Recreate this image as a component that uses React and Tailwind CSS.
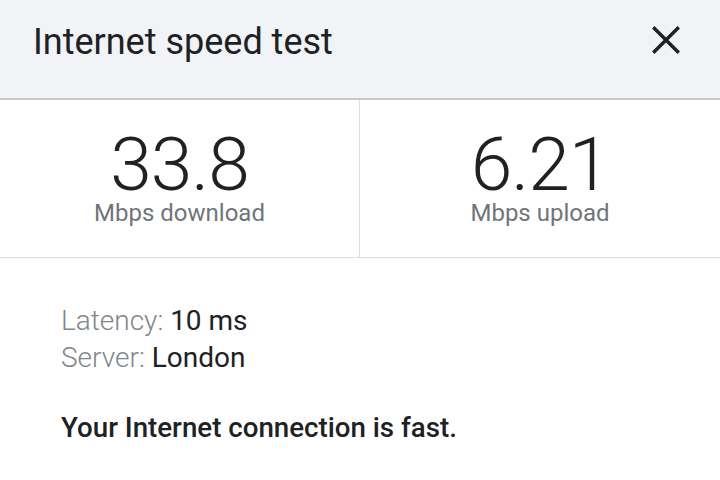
export default function App() {
  return (
    <div className="w-[720px] h-[480px] bg-white overflow-hidden" style={{ fontFamily: 'Roboto, "Noto Sans", sans-serif' }}>
      <div className="h-[100px] bg-[#f1f3f7] border-b-2 border-[#c9c9cc] flex items-start justify-between pl-[33px] pr-[36px]">
        <h1 className="text-[36px] text-[#202124] leading-none mt-[24px]">Internet speed test</h1>
        <svg width="36" height="36" viewBox="0 0 24 24" className="mt-[22px]">
          <path d="M3.5 3.5 L20.5 20.5 M20.5 3.5 L3.5 20.5" stroke="#202124" strokeWidth="2.3" fill="none" />
        </svg>
      </div>
      <div className="grid grid-cols-2 h-[158px] border-b border-[#dadce0]">
        <div className="flex flex-col items-center pt-[29px] border-r border-[#dadce0]">
          <div className="text-[75px] font-light leading-[70px] text-[#202124] tracking-[-1px]">33.8</div>
          <div className="text-[24px] text-[#70757a] leading-[24px] mt-[2px]">Mbps download</div>
        </div>
        <div className="flex flex-col items-center pt-[29px]">
          <div className="text-[75px] font-light leading-[70px] text-[#202124] tracking-[-1px]">6.21</div>
          <div className="text-[24px] text-[#70757a] leading-[24px] mt-[2px]">Mbps upload</div>
        </div>
      </div>
      <div className="pl-[61px] pt-[44px] text-[28px]">
        <div className="leading-[37px]">
          <span className="font-light text-[#80868b]">Latency: </span>
          <span className="text-[#202124]">10 ms</span>
        </div>
        <div className="leading-[37px]">
          <span className="font-light text-[#80868b]">Server: </span>
          <span className="text-[#202124]">London</span>
        </div>
        <div className="mt-[38px] font-medium leading-none text-[#202124] text-[27.7px]">Your Internet connection is fast.</div>
      </div>
    </div>
  );
}
